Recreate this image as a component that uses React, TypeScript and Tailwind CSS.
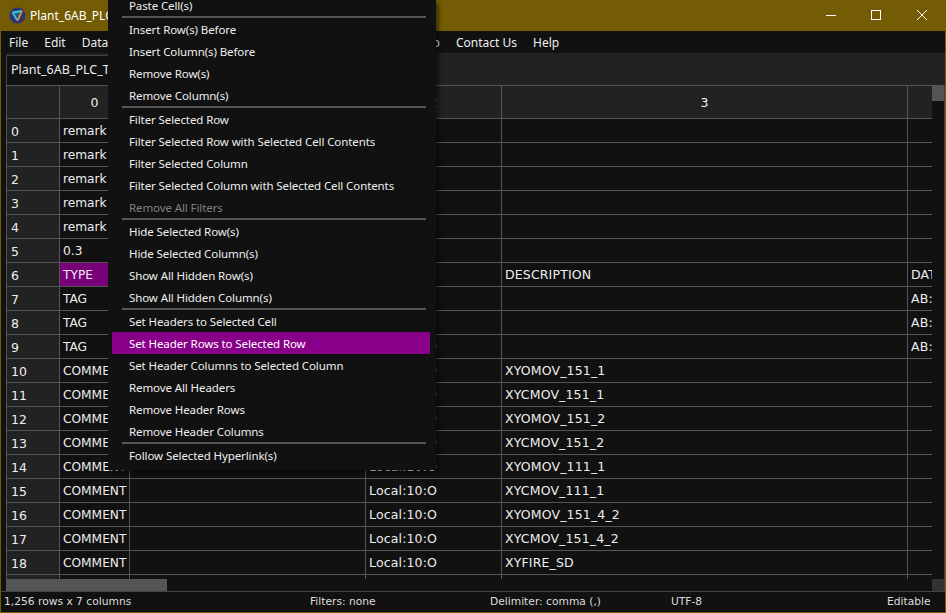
import React from 'react';

const CELL_FONT = "font-['DejaVu_Sans',sans-serif]";
const UI_FONT = "font-['Noto_Sans',sans-serif]";

type Row = [string, string, string, string];

const rows: Row[] = [
  ['remark', '', '', ''],
  ['remark', '', '', ''],
  ['remark', '', '', ''],
  ['remark', '', '', ''],
  ['remark', '', '', ''],
  ['0.3', '', '', ''],
  ['TYPE', 'NAME', 'DESCRIPTION', 'DATATYPE'],
  ['TAG', 'Local:10:C', '', 'AB:1756_IF8'],
  ['TAG', 'Local:1:I', '', 'AB:1756_IF8'],
  ['TAG', 'Local:10:O', '', 'AB:1756_OB'],
  ['COMMENT', 'Local:10:O', 'XYOMOV_151_1', ''],
  ['COMMENT', 'Local:10:O', 'XYCMOV_151_1', ''],
  ['COMMENT', 'Local:10:O', 'XYOMOV_151_2', ''],
  ['COMMENT', 'Local:10:O', 'XYCMOV_151_2', ''],
  ['COMMENT', 'Local:10:O', 'XYOMOV_111_1', ''],
  ['COMMENT', 'Local:10:O', 'XYCMOV_111_1', ''],
  ['COMMENT', 'Local:10:O', 'XYOMOV_151_4_2', ''],
  ['COMMENT', 'Local:10:O', 'XYCMOV_151_4_2', ''],
  ['COMMENT', 'Local:10:O', 'XYFIRE_SD', ''],
];

const menuGroups: string[][] = [
  ['Paste Cell(s)'],
  ['Insert Row(s) Before', 'Insert Column(s) Before', 'Remove Row(s)', 'Remove Column(s)'],
  [
    'Filter Selected Row',
    'Filter Selected Row with Selected Cell Contents',
    'Filter Selected Column',
    'Filter Selected Column with Selected Cell Contents',
    'Remove All Filters',
  ],
  ['Hide Selected Row(s)', 'Hide Selected Column(s)', 'Show All Hidden Row(s)', 'Show All Hidden Column(s)'],
  [
    'Set Headers to Selected Cell',
    'Set Header Rows to Selected Row',
    'Set Header Columns to Selected Column',
    'Remove All Headers',
    'Remove Header Rows',
    'Remove Header Columns',
  ],
  ['Follow Selected Hyperlink(s)'],
];

const ContextMenu = () => (
  <div className={`absolute left-[108px] top-0 z-10 h-[470px] w-[328px] overflow-hidden bg-[#111111] shadow-[3px_3px_4px_rgba(0,0,0,0.45)] ${UI_FONT}`}>
    <div className="-mt-[6px] flex flex-col px-1">
      {menuGroups.map((group, i) => (
        <div key={i}>
          {i > 0 && <div className="ml-[10px] h-[2px] w-[304px] bg-[#555555]" />}
          {group.map((item) => {
            const active = item === 'Set Header Rows to Selected Row';
            const disabled = item === 'Remove All Filters';
            return (
              <div
                key={item}
                className={`flex h-[22px] w-[318px] items-center pl-[17px] pt-[2px] text-[11.5px] tracking-[-0.1px] ${active ? 'bg-[#880088] text-white' : disabled ? 'text-[#808080]' : 'text-[#eeeeee]'}`}
              >
                {item}
              </div>
            );
          })}
        </div>
      ))}
    </div>
  </div>
);

const TitleBar = () => (
  <div className={`flex h-[31px] shrink-0 items-center bg-[#745c04] ${UI_FONT}`}>
    <svg width="18" height="18" viewBox="0 0 18 18" className="ml-2">
      <circle cx="8.5" cy="8.5" r="8" fill="#2e3472" />
      <path d="M3.5 5.5 L13 4 L8.5 14 Z" fill="#1f5f86" />
      <path d="M3.5 5.5 L13 4 M3.5 5.5 L8 13" stroke="#3cc4dc" strokeWidth="1.8" fill="none" />
      <path d="M13 4 L8.5 14" stroke="#e88a34" strokeWidth="1.8" fill="none" />
    </svg>
    <span className="ml-[3px] text-[12px] text-white">Plant_6AB_PLC_Tags.csv</span>
    <div className="ml-auto flex items-center">
      <svg width="46" height="31" viewBox="0 0 46 31"><path d="M19 15.5H29" stroke="#fff" strokeWidth="1" /></svg>
      <svg width="46" height="31" viewBox="0 0 46 31"><rect x="18.5" y="10.5" width="9" height="9" fill="none" stroke="#fff" strokeWidth="1" /></svg>
      <svg width="46" height="31" viewBox="0 0 46 31"><path d="M18 10L28 20M28 10L18 20" stroke="#fff" strokeWidth="1" /></svg>
    </div>
  </div>
);

const MenuBar = () => (
  <div className={`flex h-[22px] shrink-0 items-center bg-[#111111] pt-[2px] text-[12px] text-[#eeeeee] ${UI_FONT}`}>
    <div className="flex w-[439px] items-center gap-4 pl-2">
      <span>File</span>
      <span>Edit</span>
      <span>Data</span>
      <span className="ml-auto">Setup</span>
    </div>
    <span className="ml-4">Contact Us</span>
    <span className="ml-4">Help</span>
  </div>
);

const TabBar = () => (
  <div className={`flex h-8 shrink-0 items-end bg-[#222222] ${UI_FONT}`}>
    <div className="flex h-[30px] w-[200px] items-center border-l border-t border-[#444444] bg-[#111111] pl-1 text-[12.5px] text-[#eeeeee]">
      Plant_6AB_PLC_Tags.csv
    </div>
  </div>
);

const HeaderRow = () => (
  <div className="flex h-[34px] shrink-0 border-y border-[#555555] bg-[#222222] text-[12.5px] text-[#eeeeee]">
    <div className="w-[53px] shrink-0 border-r border-[#555555]" />
    <div className="flex w-[70px] shrink-0 items-center justify-center border-r border-[#555555] pt-[2px]">0</div>
    <div className="flex w-[236px] shrink-0 items-center justify-center border-r border-[#555555] pt-[2px]">1</div>
    <div className="flex w-[136px] shrink-0 items-center justify-center border-r border-[#555555] pt-[2px]">2</div>
    <div className="flex w-[406px] shrink-0 items-center justify-center border-r border-[#555555] pt-[2px]">3</div>
    <div className="flex w-[100px] shrink-0 items-center justify-center pt-[2px]">4</div>
  </div>
);

const DataRow = ({ row, index }: { row: Row; index: number }) => (
  <div className="flex h-6 shrink-0 border-b border-[#555555] text-[12.5px] tracking-[0.15px] text-[#eeeeee]">
    <div className="flex w-[53px] shrink-0 items-center border-r border-[#555555] bg-[#222222] pl-1 pt-[3px]">{index}</div>
    <div className={`flex w-[70px] shrink-0 items-center overflow-hidden whitespace-nowrap border-r border-[#555555] pl-[3px] pt-px text-[12.2px] tracking-normal ${index === 6 ? 'bg-[#7a007a]' : ''}`}>{row[0]}</div>
    <div className="w-[236px] shrink-0 border-r border-[#555555]" />
    <div className="flex w-[136px] shrink-0 items-center whitespace-nowrap border-r border-[#555555] pl-[3px] pt-px">{row[1]}</div>
    <div className="flex w-[406px] shrink-0 items-center whitespace-nowrap border-r border-[#555555] pl-[3px] pt-px">{row[2]}</div>
    <div className="flex w-[120px] shrink-0 items-center whitespace-nowrap pl-[3px] pt-px">{row[3]}</div>
  </div>
);

const Table = () => (
  <div className={`flex min-h-0 flex-1 ${CELL_FONT}`}>
    <div className="flex min-w-0 flex-1 flex-col">
      <div className="flex h-[494px] flex-col overflow-hidden border-l border-[#555555]">
        <HeaderRow />
        {rows.map((row, i) => (
          <DataRow key={i} row={row} index={i} />
        ))}
        <div className="flex h-6 shrink-0">
          <div className="w-[53px] shrink-0 border-r border-[#555555] bg-[#222222]" />
          <div className="w-[70px] shrink-0 border-r border-[#555555]" />
          <div className="w-[236px] shrink-0 border-r border-[#555555]" />
          <div className="w-[136px] shrink-0 border-r border-[#555555]" />
          <div className="w-[406px] shrink-0 border-r border-[#555555]" />
        </div>
      </div>
      <div className="flex h-3 shrink-0">
        <div className="h-full w-[161px] bg-[#555555]" />
      </div>
    </div>
    <div className="flex w-[13px] shrink-0 flex-col border-r border-[#444444]">
      <div className="h-4 bg-[#555555]" />
      <div className="flex-1" />
      <div className="h-3 bg-[#333333]" />
    </div>
  </div>
);

const StatusBar = () => (
  <div className={`flex h-[21px] shrink-0 items-center border-t border-[#444444] bg-[#111111] pl-[3px] text-[10.7px] text-[#dddddd] ${CELL_FONT}`}>
    <span className="w-[306px]">1,256 rows x 7 columns</span>
    <span className="w-[180px]">Filters: none</span>
    <span className="w-[181px]">Delimiter: comma (,)</span>
    <span className="w-[216px]">UTF-8</span>
    <span>Editable</span>
  </div>
);

export default function App() {
  return (
    <div className="relative flex h-screen w-screen flex-col overflow-hidden bg-[#745c04] px-px pb-px">
      <TitleBar />
      <div className="flex min-h-0 flex-1 flex-col bg-[#111111]">
        <MenuBar />
        <div className="flex min-h-0 flex-1 flex-col pl-[5px]">
          <TabBar />
          <Table />
        </div>
        <StatusBar />
      </div>
      <ContextMenu />
    </div>
  );
}
